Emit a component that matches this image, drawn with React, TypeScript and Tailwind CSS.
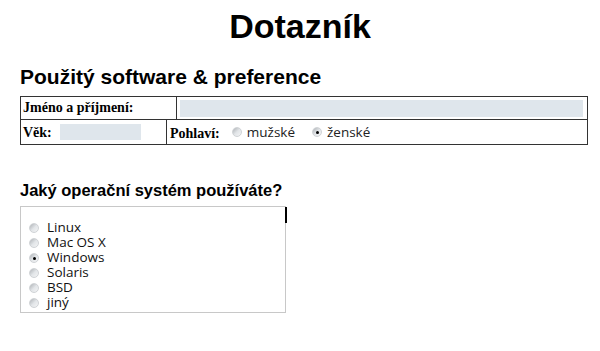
import React from "react";

function Radio({ checked = false }: { checked?: boolean }) {
  return (
    <span className="relative inline-block w-[10px] h-[10px] rounded-full bg-gradient-to-br from-[#aeb2b6] via-[#e2e5e8] to-[#f4f5f6] border border-[#d0d3d6] shrink-0">
      {checked && (
        <span className="absolute left-[3px] top-[3px] w-[3px] h-[3px] rounded-full bg-black" />
      )}
    </span>
  );
}

const systems = [
  { name: "Linux", checked: false },
  { name: "Mac OS X", checked: false },
  { name: "Windows", checked: true },
  { name: "Solaris", checked: false },
  { name: "BSD", checked: false },
  { name: "jiný", checked: false },
];

export default function App() {
  return (
    <div className="w-[600px] h-[351px] bg-white text-black font-['Liberation_Sans',Arial,sans-serif] overflow-hidden">
      <h1 className="pt-[7px] text-center text-[34px] leading-[38px] font-bold">Dotazník</h1>

      <h2 className="mt-[20px] ml-[20px] text-[21px] leading-[24px] font-bold">
        Použitý software &amp; preference
      </h2>

      <div className="mt-[7px] mx-[20px] w-[568px] border border-[#333] font-['Liberation_Serif',serif] text-[14px] font-bold">
        <div className="flex h-[23px] border-b border-[#333]">
          <div className="w-[156px] border-r border-[#333] pl-[2px] leading-[22px]">
            Jméno a příjmení:
          </div>
          <div className="flex-1 flex items-center pl-[3px] pr-[4px]">
            <div className="w-full h-[17px] bg-[#dfe6ec]" />
          </div>
        </div>
        <div className="flex h-[24px]">
          <div className="w-[146px] border-r border-[#333] pl-[2px] flex items-center gap-[8px]">
            <span className="leading-[22px] pt-[2px]">Věk:</span>
            <div className="w-[81px] h-[16px] bg-[#dfe6ec]" />
          </div>
          <div className="flex items-center pl-[3px]">
            <span className="pt-[2px]">Pohlaví:</span>
            <span className="ml-[12px] flex items-center gap-[5px] font-['Open_Sans',sans-serif] font-normal text-[13.5px] leading-[16px] text-[#222]">
              <Radio />
              <span>mužské</span>
            </span>
            <span className="ml-[17px] flex items-center gap-[5px] font-['Open_Sans',sans-serif] font-normal text-[13.5px] leading-[16px] text-[#222]">
              <Radio checked />
              <span>ženské</span>
            </span>
          </div>
        </div>
      </div>

      <h3 className="mt-[36px] ml-[20px] text-[16.5px] leading-[18px] font-bold">
        Jaký operační systém používáte?
      </h3>

      <div className="relative mt-[7px] ml-[20px] w-[266px] h-[107px] border border-[#c8c8c8] pt-[13px] pl-[8px] font-['Open_Sans',sans-serif] text-[13.5px] leading-[15px] text-[#111]">
        <span className="absolute right-[-2px] top-0 w-[2px] h-[16px] bg-black" />
        {systems.map((s) => (
          <div key={s.name} className="flex items-center gap-[8px] h-[15px]">
            <Radio checked={s.checked} />
            <span>{s.name}</span>
          </div>
        ))}
      </div>
    </div>
  );
}
